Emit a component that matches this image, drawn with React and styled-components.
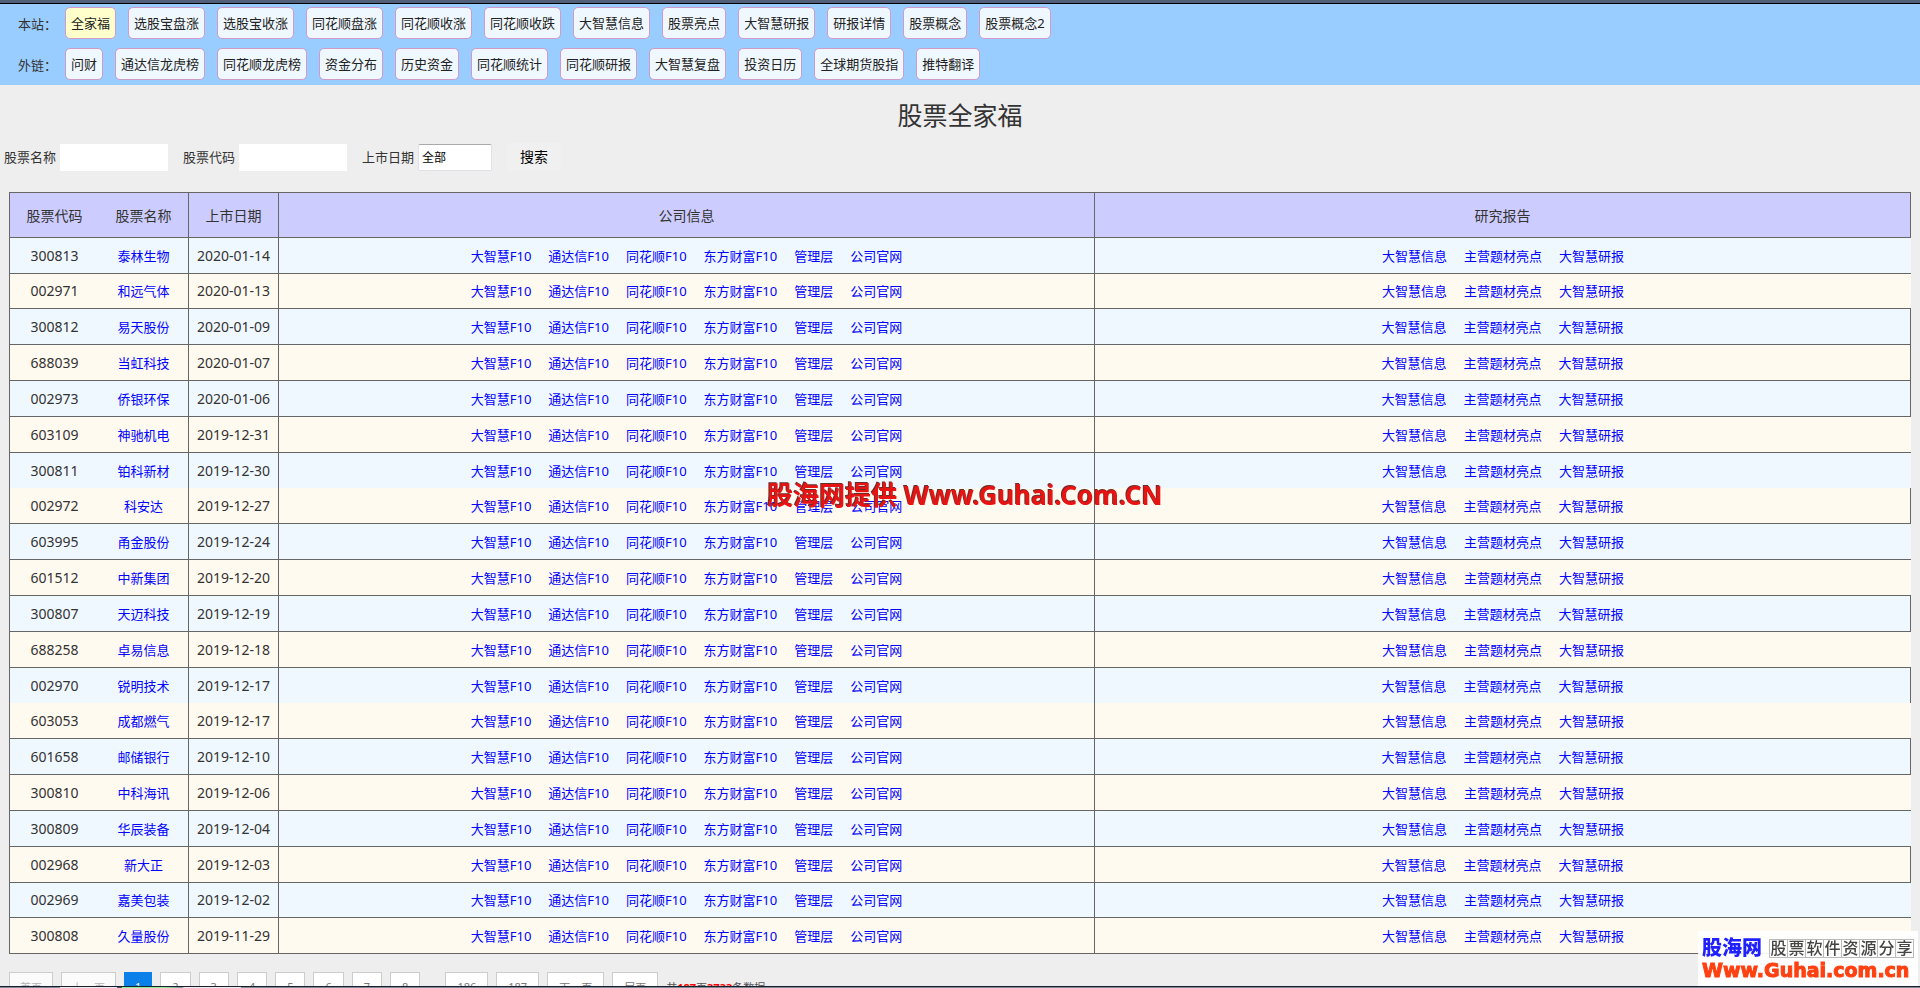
import React, { useState } from "react"

import styled, { createGlobalStyle } from "styled-components"

const colors = {
  page: "#eee",
  nav: "#99ccff",
  chip: "#f0f8ff",
  chipActive: "#ffffcc",
  chipBorder: "#d09acb",
  line: "#666",
  head: "#ccccff",
  odd: "#f0f8ff",
  even: "#fffaf0",
  link: "#0000ff",
  text: "#333",
}

const GlobalStyle = createGlobalStyle`
  * {
    box-sizing: border-box;
  }
  body {
    margin: 0;
    background: ${colors.page};
    color: ${colors.text};
    font-family: "Noto Sans", "Noto Sans CJK SC", sans-serif;
    font-size: 13px;
  }
  a {
    text-decoration: none;
  }
  button, input, select {
    font-family: inherit;
  }
`

const Page = styled.div`
  display: flex;
  flex-direction: column;
  height: 100vh;
  overflow: hidden;
`

const TopStrip = styled.div`
  flex: none;
  height: 4px;
  background: #525f78;
  border-bottom: 1px solid #000;
`

const BottomStrip = styled.div`
  flex: none;
  height: 2px;
  border-top: 1px solid #16202c;
  background: linear-gradient(
    to right,
    #7d8b9b 60px,
    #f4e9ec 60px 117px,
    #4a5663 117px 122px,
    #8ff09a 122px 165px,
    #7d8b9b 182px,
    #f4e9ec 184px 241px,
    #7d8b9b 241px
  );
`

const Content = styled.main`
  flex: 1;
  min-height: 0;
  overflow: hidden;
`

const Nav = styled.nav`
  display: flex;
  flex-direction: column;
  gap: 9px;
  padding: 3px 18px 5px;
  background: ${colors.nav};
`

const NavRow = styled.div`
  display: flex;
  align-items: center;
  gap: 12px;
`

const NavLabel = styled.span`
  width: 35px;
  white-space: nowrap;
`

const Chip = styled.a`
  height: 32px;
  padding: 0 5px;
  border: 1px solid ${colors.chipBorder};
  border-radius: 5px;
  background: ${props => (props.$active ? colors.chipActive : colors.chip)};
  color: #222;
  line-height: 30px;
  white-space: nowrap;
`

const Title = styled.h1`
  margin: 12px 0 10px;
  font-size: 25px;
  font-weight: 400;
  line-height: 36px;
  text-align: center;
`

const SearchForm = styled.form`
  display: flex;
  align-items: center;
  gap: 15px;
  height: 28px;
  margin-bottom: 21px;
  padding-left: 4px;
`

const Field = styled.div`
  display: flex;
  align-items: center;
  gap: 4px;
  line-height: 16px;
`

const TextInput = styled.input`
  width: 108px;
  height: 27px;
  padding: 0 4px;
  border: none;
  background: #fff;
`

const Select = styled.select`
  appearance: none;
  width: 74px;
  height: 27px;
  padding: 0 3px;
  border: 1px solid #e0e0e6;
  border-top-color: #aaa;
  border-radius: 2px;
  background: #fff;
  color: #000;
  font-size: 12px;
`

const SearchButton = styled.button`
  width: 54px;
  height: 28px;
  padding: 0;
  border: none;
  background: #f0f0f0;
  color: #000;
  font-size: 14px;
  line-height: 24px;
`

const TableWrap = styled.div`
  padding: 0 9px;
`

const Table = styled.table`
  width: 100%;
  table-layout: fixed;
  border-spacing: 0;
  border-top: 1px solid ${colors.line};
  border-left: 1px solid ${colors.line};
  text-align: center;
`

const HeadCell = styled.th`
  width: ${props => props.$width || "auto"};
  height: 45px;
  padding: 0;
  border-bottom: 1px solid ${colors.line};
  border-right: ${props => (props.$open ? "none" : `1px solid ${colors.line}`)};
  background: ${colors.head};
  font-size: 14px;
  font-weight: 400;
`

const Cell = styled.td`
  padding: 0;
  border-right: ${props => (props.$open ? "none" : `1px solid ${colors.line}`)};
  font-size: ${props => (props.$number ? "14px" : "13px")};
  line-height: 20px;
  white-space: nowrap;
`

const Row = styled.tr`
  height: ${props => (props.$short ? "35px" : "36px")};
  background: ${colors.even};
  &:nth-child(odd) {
    background: ${colors.odd};
  }
  & > td {
    border-bottom: ${props =>
      props.$merged ? "none" : `1px solid ${colors.line}`};
  }
`

const Links = styled.div`
  display: flex;
  justify-content: center;
  gap: 17px;
`

const Link = styled.a`
  color: ${colors.link};
`

const Pager = styled.div`
  display: flex;
  align-items: center;
  gap: 8px;
  padding: 18px 9px;
  color: #555;
  font-size: 11px;
`

const PageButton = styled.button`
  height: 29px;
  padding: 0 11px;
  border: 1px solid #ccc;
  background: #fff;
  color: #777;
  font-size: 11px;
  &:disabled {
    padding: 0 10px;
    background: #fbfbfb;
    color: #b5b5b5;
  }
  &[aria-current="page"] {
    padding: 0 10px;
    border-color: #0a80e8;
    background: #0a80e8;
    color: #fff;
  }
`

const PageGap = styled.span`
  width: 9px;
`

const Total = styled.span`
  white-space: nowrap;
  strong {
    color: #f00;
  }
`

const Watermark = styled.div`
  position: fixed;
  inset: 0;
  display: flex;
  align-items: center;
  justify-content: center;
  padding-left: 10px;
  color: #e81414;
  font-size: 26px;
  font-weight: 700;
  text-shadow: -1px -1px 0 #6b2f2a;
  pointer-events: none;
`

const Badge = styled.div`
  position: fixed;
  right: 2px;
  bottom: 2px;
  width: 220px;
  height: 55px;
  padding: 6px 4px 0;
  background: rgba(255, 255, 255, 0.92);
  white-space: nowrap;
`

const BadgeTop = styled.div`
  display: flex;
  align-items: center;
  justify-content: space-between;
  height: 22px;
`

const BadgeName = styled.strong`
  color: #2020ff;
  font-size: 20px;
  font-weight: 900;
  line-height: 22px;
`

const BadgeTiles = styled.span`
  display: flex;
  border-left: 1px solid #bbb;
`

const BadgeTile = styled.span`
  width: 18px;
  height: 19px;
  border: 1px solid #bbb;
  border-left: none;
  color: #444;
  font-size: 16px;
  font-weight: 500;
  line-height: 16px;
  text-align: center;
`

const BadgeUrl = styled.div`
  color: #ff4010;
  font-family: "DejaVu Sans", sans-serif;
  font-size: 19px;
  font-weight: 700;
  line-height: 22px;
  -webkit-text-stroke: 1px #ff4010;
`

const siteLinks = [
  "全家福",
  "选股宝盘涨",
  "选股宝收涨",
  "同花顺盘涨",
  "同花顺收涨",
  "同花顺收跌",
  "大智慧信息",
  "股票亮点",
  "大智慧研报",
  "研报详情",
  "股票概念",
  "股票概念2",
]

const outerLinks = [
  "问财",
  "通达信龙虎榜",
  "同花顺龙虎榜",
  "资金分布",
  "历史资金",
  "同花顺统计",
  "同花顺研报",
  "大智慧复盘",
  "投资日历",
  "全球期货股指",
  "推特翻译",
]

const companyLinks = [
  "大智慧F10",
  "通达信F10",
  "同花顺F10",
  "东方财富F10",
  "管理层",
  "公司官网",
]

const reportLinks = ["大智慧信息", "主营题材亮点", "大智慧研报"]

// edge: right border, short: 35px row, merged: no line below
const stocks = [
  { code: "300813", name: "泰林生物", date: "2020-01-14" },
  { code: "002971", name: "和远气体", date: "2020-01-13", short: true },
  { code: "300812", name: "易天股份", date: "2020-01-09", edge: true },
  { code: "688039", name: "当虹科技", date: "2020-01-07", edge: true },
  { code: "002973", name: "侨银环保", date: "2020-01-06", edge: true },
  { code: "603109", name: "神驰机电", date: "2019-12-31" },
  { code: "300811", name: "铂科新材", date: "2019-12-30", short: true, merged: true },
  { code: "002972", name: "科安达", date: "2019-12-27", edge: true },
  { code: "603995", name: "甬金股份", date: "2019-12-24" },
  { code: "601512", name: "中新集团", date: "2019-12-20" },
  { code: "300807", name: "天迈科技", date: "2019-12-19", edge: true },
  { code: "688258", name: "卓易信息", date: "2019-12-18" },
  { code: "002970", name: "锐明技术", date: "2019-12-17", short: true, merged: true, edge: true },
  { code: "603053", name: "成都燃气", date: "2019-12-17" },
  { code: "601658", name: "邮储银行", date: "2019-12-10", edge: true },
  { code: "300810", name: "中科海讯", date: "2019-12-06" },
  { code: "300809", name: "华辰装备", date: "2019-12-04" },
  { code: "002968", name: "新大正", date: "2019-12-03", edge: true },
  { code: "002969", name: "嘉美包装", date: "2019-12-02", short: true },
  { code: "300808", name: "久量股份", date: "2019-11-29" },
]

const LinkList = ({ items }) => (
  <Links>
    {items.map(item => (
      <Link href="#" key={item}>
        {item}
      </Link>
    ))}
  </Links>
)

const NavGroup = ({ label, items, active }) => (
  <NavRow>
    <NavLabel>{label}</NavLabel>
    {items.map(item => (
      <Chip href="#" key={item} $active={item === active}>
        {item}
      </Chip>
    ))}
  </NavRow>
)

const StockTable = () => (
  <TableWrap>
    <Table>
      <thead>
        <tr>
          <HeadCell $width="89px" $open>
            股票代码
          </HeadCell>
          <HeadCell $width="90px">股票名称</HeadCell>
          <HeadCell $width="90px">上市日期</HeadCell>
          <HeadCell>公司信息</HeadCell>
          <HeadCell>研究报告</HeadCell>
        </tr>
      </thead>
      <tbody>
        {stocks.map(stock => (
          <Row key={stock.code} $short={stock.short} $merged={stock.merged}>
            <Cell $number $open>
              {stock.code}
            </Cell>
            <Cell>
              <Link href="#">{stock.name}</Link>
            </Cell>
            <Cell $number>{stock.date}</Cell>
            <Cell>
              <LinkList items={companyLinks} />
            </Cell>
            <Cell $open={!stock.edge}>
              <LinkList items={reportLinks} />
            </Cell>
          </Row>
        ))}
      </tbody>
    </Table>
  </TableWrap>
)

const Pagination = () => {
  const [page, setPage] = useState(1)
  const pageButton = number => (
    <PageButton
      key={number}
      aria-current={page === number ? "page" : undefined}
      onClick={() => setPage(number)}
    >
      {number}
    </PageButton>
  )
  return (
    <Pager>
      <PageButton disabled={page === 1} onClick={() => setPage(1)}>
        首页
      </PageButton>
      <PageButton disabled={page === 1} onClick={() => setPage(page - 1)}>
        上一页
      </PageButton>
      {[1, 2, 3, 4, 5, 6, 7, 8].map(pageButton)}
      <PageGap />
      {[186, 187].map(pageButton)}
      <PageButton disabled={page === 187} onClick={() => setPage(page + 1)}>
        下一页
      </PageButton>
      <PageButton disabled={page === 187} onClick={() => setPage(187)}>
        尾页
      </PageButton>
      <Total>
        共<strong>187</strong>页<strong>3733</strong>条数据
      </Total>
    </Pager>
  )
}

export default function App() {
  return (
    <Page>
      <GlobalStyle />
      <TopStrip />
      <Content>
        <Nav>
          <NavGroup label="本站：" items={siteLinks} active="全家福" />
          <NavGroup label="外链：" items={outerLinks} />
        </Nav>
        <Title>股票全家福</Title>
        <SearchForm onSubmit={e => e.preventDefault()}>
          <Field>
            <label htmlFor="name">股票名称</label>
            <TextInput id="name" type="text" />
          </Field>
          <Field>
            <label htmlFor="code">股票代码</label>
            <TextInput id="code" type="text" />
          </Field>
          <Field>
            <label htmlFor="date">上市日期</label>
            <Select id="date">
              <option>全部</option>
            </Select>
          </Field>
          <SearchButton type="submit">搜索</SearchButton>
        </SearchForm>
        <StockTable />
        <Pagination />
      </Content>
      <BottomStrip />
      <Watermark>股海网提供 Www.Guhai.Com.CN</Watermark>
      <Badge>
        <BadgeTop>
          <BadgeName>股海网</BadgeName>
          <BadgeTiles>
            {[..."股票软件资源分享"].map(char => (
              <BadgeTile key={char}>{char}</BadgeTile>
            ))}
          </BadgeTiles>
        </BadgeTop>
        <BadgeUrl>Www.Guhai.com.cn</BadgeUrl>
      </Badge>
    </Page>
  )
}
